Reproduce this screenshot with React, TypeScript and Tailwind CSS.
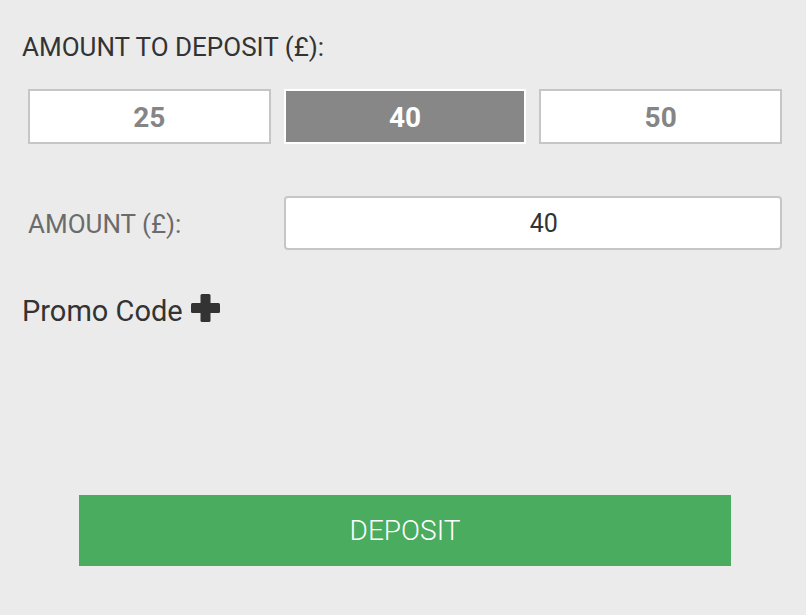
import React, { useState } from "react";

const presets = [25, 40, 50];

// Deposit form
export default function App() {
  const [amount, setAmount] = useState(40);

  return (
    <div
      className="w-[806px] h-[615px] bg-[#ebebeb] overflow-hidden"
      style={{ fontFamily: "Roboto, 'Noto Sans', sans-serif" }}
    >
      {/* Heading */}
      <div className="pt-[32px] pl-[22px] text-[26px] leading-[30px] text-[#333333]">
        AMOUNT TO DEPOSIT (£):
      </div>

      {/* Preset amounts + input */}
      <div className="ml-[28px] mr-[24px] mt-[27px] grid grid-cols-3 gap-x-[13px] gap-y-[52px]">
        {presets.map((p) => (
          <button
            key={p}
            onClick={() => setAmount(p)}
            className={`h-[55px] border-2 flex items-center justify-center pt-[3px] text-[28px] font-bold ${
              amount === p
                ? "bg-[#878787] border-white text-white"
                : "bg-white border-[#c6c6c6] text-[#858585]"
            }`}
          >
            {p}
          </button>
        ))}

        <div className="flex items-center pt-[3px] text-[26px] text-[#6b6b6b]">AMOUNT (£):</div>
        <div className="col-span-2 h-[54px] bg-white border-2 border-[#c6c6c6] rounded-[4px] flex items-center justify-center pl-[22px] pt-[2px] text-[25px] text-[#333333]">
          {amount}
        </div>
      </div>

      {/* Promo code */}
      <div className="mt-[44px] pl-[22px] flex items-end gap-[8px] text-[29px] leading-[34px] text-[#333333]">
        <span>Promo Code</span>
        <svg width="29" height="28" viewBox="0 0 29 28" className="mb-[6px]">
          <rect x="9.5" y="0" width="10" height="28" rx="1.5" fill="#333333" />
          <rect x="0" y="9" width="29" height="10" rx="1.5" fill="#333333" />
        </svg>
      </div>

      {/* Submit */}
      <button className="mt-[167px] ml-[79px] w-[652px] h-[71px] bg-[#4aac5f] text-white text-[28px] font-light flex items-center justify-center">
        DEPOSIT
      </button>
    </div>
  );
}
